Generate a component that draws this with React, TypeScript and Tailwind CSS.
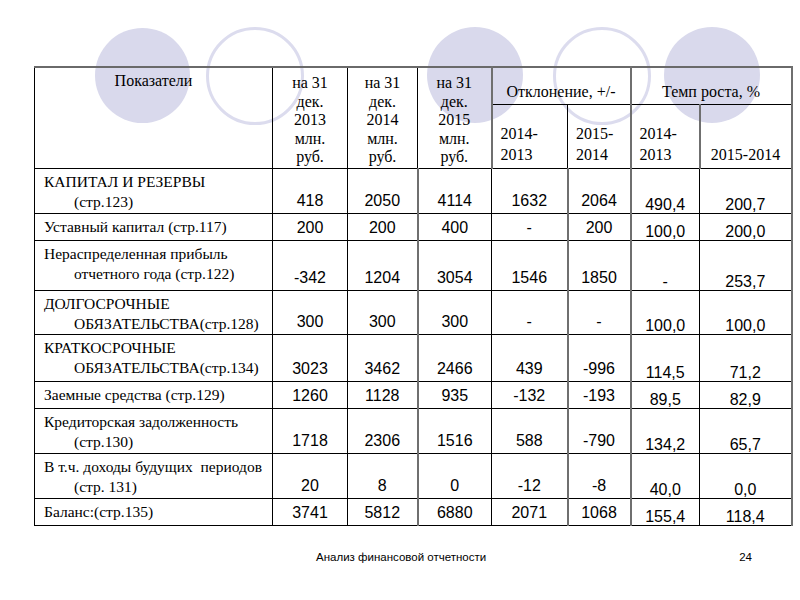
export default function App() {
  const rows = [
    { label: ['КАПИТАЛ И РЕЗЕРВЫ', '(стр.123)'], v: ['418', '2050', '4114', '1632', '2064'], p: ['490,4', '200,7'], h: 'h-[45px]' },
    { label: ['Уставный капитал (стр.117)'], v: ['200', '200', '400', '-', '200'], p: ['100,0', '200,0'], h: 'h-[27px]' },
    { label: ['Нераспределенная прибыль', 'отчетного года (стр.122)'], v: ['-342', '1204', '3054', '1546', '1850'], p: ['-', '253,7'], h: 'h-[50px]' },
    { label: ['ДОЛГОСРОЧНЫЕ', 'ОБЯЗАТЕЛЬСТВА(стр.128)'], v: ['300', '300', '300', '-', '-'], p: ['100,0', '100,0'], h: 'h-[43px]' },
    { label: ['КРАТКОСРОЧНЫЕ', 'ОБЯЗАТЕЛЬСТВА(стр.134)'], v: ['3023', '3462', '2466', '439', '-996'], p: ['114,5', '71,2'], h: 'h-[47px]' },
    { label: ['Заемные средства (стр.129)'], v: ['1260', '1128', '935', '-132', '-193'], p: ['89,5', '82,9'], h: 'h-[27px]' },
    { label: ['Кредиторская задолженность', '(стр.130)'], v: ['1718', '2306', '1516', '588', '-790'], p: ['134,2', '65,7'], h: 'h-[45px]' },
    { label: ['В т.ч. доходы будущих\u00a0 периодов', '(стр. 131)'], v: ['20', '8', '0', '-12', '-8'], p: ['40,0', '0,0'], h: 'h-[45px]' },
    { label: ['Баланс:(стр.135)'], v: ['3741', '5812', '6880', '2071', '1068'], p: ['155,4', '118,4'], h: 'h-[27px]' },
  ];

  // columns whose right edge is drawn as a thicker grey line
  const greyRight = [false, false, true, false, true, true, false, true];

  const serif = "font-['Liberation_Serif','Times_New_Roman',serif]";
  const sans = "font-['Liberation_Sans',Arial,sans-serif]";
  const cell = 'border border-black';
  const grey = 'border-r-2 border-r-[#6f6f6f]';
  const dateHead = `${cell} align-top font-normal pt-[6px] leading-[18.5px] text-[16px]`;

  return (
    <div className="relative w-[800px] h-[600px] bg-white overflow-hidden text-black">
      {/* decorative circles behind the table */}
      <div className="absolute left-[95px] top-[28px] w-[95px] h-[95px] rounded-full bg-[#d9d9ec]" />
      <div className="absolute left-[206px] top-[27px] w-[98px] h-[98px] rounded-full border-[3px] border-[#dcdcee]" />
      <div className="absolute left-[427px] top-[27px] w-[96px] h-[96px] rounded-full bg-[#d9d9ec]" />
      <div className="absolute left-[553px] top-[27px] w-[98px] h-[98px] rounded-full border-[3px] border-[#dcdcee]" />
      <div className="absolute left-[664px] top-[27px] w-[96px] h-[96px] rounded-full bg-[#d9d9ec]" />

      <div className="relative pt-[66px] pl-[34px]">
        <table className={`table-fixed w-[757px] border-collapse border-t-2 border-t-[#6a6a6a] ${serif} text-[16px]`}>
          <colgroup>
            <col className="w-[238px]" />
            <col className="w-[75px]" />
            <col className="w-[70px]" />
            <col className="w-[74px]" />
            <col className="w-[76px]" />
            <col className="w-[63px]" />
            <col className="w-[69px]" />
            <col className="w-[92px]" />
          </colgroup>
          <thead>
            <tr className="h-[37px]">
              <th rowSpan={2} className={`${cell} align-top font-normal pt-[3px] leading-[20px]`}>Показатели</th>
              <th rowSpan={2} className={dateHead}>на 31<br />дек.<br />2013<br />млн.<br />руб.</th>
              <th rowSpan={2} className={dateHead}>на 31<br />дек.<br />2014<br />млн.<br />руб.</th>
              <th rowSpan={2} className={`${dateHead} ${grey}`}>на 31<br />дек.<br />2015<br />млн.<br />руб.</th>
              <th colSpan={2} className={`${cell} ${grey} align-bottom font-normal pb-[2px] leading-[20px]`}>Отклонение, +/-</th>
              <th colSpan={2} className={`${cell} ${grey} align-bottom font-normal pb-[2px] leading-[20px]`}>Темп роста, %</th>
            </tr>
            <tr className="h-[64px]">
              <th className={`${cell} align-bottom font-normal text-left pl-[8px] pb-[3px] leading-[21px]`}>2014-<br />2013</th>
              <th className={`${cell} ${grey} align-bottom font-normal text-left pl-[8px] pb-[3px] leading-[21px]`}>2015-<br />2014</th>
              <th className={`${cell} ${grey} align-bottom font-normal text-left pl-[8px] pb-[3px] leading-[21px]`}>2014-<br />2013</th>
              <th className={`${cell} ${grey} align-bottom font-normal text-center pb-[3px] leading-[21px]`}>2015-2014</th>
            </tr>
          </thead>
          <tbody>
            {rows.map(r => (
              <tr key={r.label[0]} className={r.h}>
                <td className={`${cell} align-top pt-[3px] pl-[39px] pr-[2px] indent-[-30px] leading-[20px] text-[15.5px] whitespace-nowrap`}>
                  {r.label[0]}
                  {r.label[1] && (
                    <>
                      <br />
                      {r.label[1]}
                    </>
                  )}
                </td>
                {r.v.map((v, i) => (
                  <td
                    key={i}
                    className={`${cell} ${greyRight[i + 1] ? grey : ''} ${sans} align-bottom text-center pb-[3px] leading-[18px]`}
                  >
                    {v}
                  </td>
                ))}
                {r.p.map((v, i) => (
                  <td
                    key={i}
                    className={`${cell} ${greyRight[i + 6] ? grey : ''} ${sans} align-bottom text-center pb-0 leading-[16px]`}
                  >
                    {v}
                  </td>
                ))}
              </tr>
            ))}
          </tbody>
        </table>
      </div>

      <div className={`flex items-center mt-[23px] pl-[316px] pr-[48px] ${sans} text-[11.5px]`}>
        <span className="flex-1">Анализ финансовой отчетности</span>
        <span>24</span>
      </div>
    </div>
  );
}
